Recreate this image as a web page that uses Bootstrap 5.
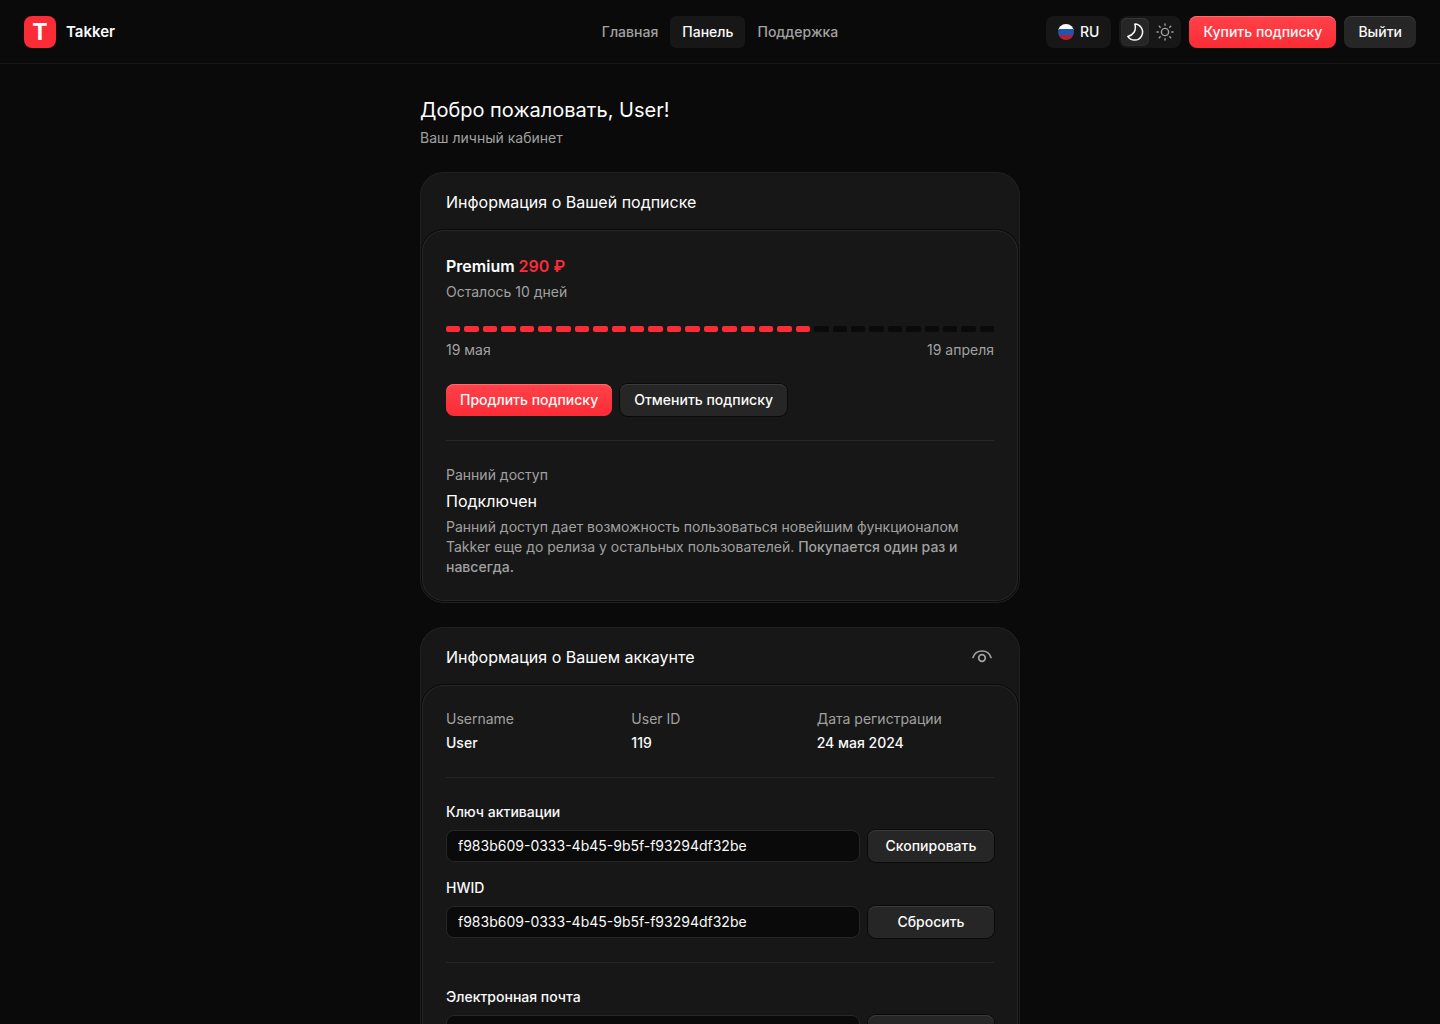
<!DOCTYPE html>
<html lang="ru" data-bs-theme="dark">
<head>
<meta charset="utf-8">
<meta name="viewport" content="width=device-width, initial-scale=1">
<title>Takker</title>
<link href="https://cdn.jsdelivr.net/npm/bootstrap@5.3.0/dist/css/bootstrap.min.css" rel="stylesheet">
<style>
  :root { --bg: #0a0a0a; --surface: #171717; --line: #262626; --muted: #a1a1a1; --text: #fafafa; --accent: #fb2c36; --accent-hi: #ff4249; }
  body { font-family: Inter, "Liberation Sans", sans-serif; font-size: 14px; line-height: 20px; background: var(--bg); color: var(--text); }
  .topbar { height: 64px; border-bottom: 1px solid var(--surface); }
  .topbar-side { flex: 1 1 0; }
  .logo-link { gap: 10px; }
  .logo-tile { width: 32px; height: 32px; border-radius: 8px; background: var(--accent); font-size: 23px; line-height: 32px; font-weight: 700; }
  .brand-name { font-size: 15px; line-height: 24px; }
  .tab-link { height: 32px; padding: 6px 12px; border-radius: 6px; color: var(--muted); }
  .tab-link.active { background: var(--surface); color: var(--text); }
  .lang-btn { height: 32px; padding: 0 12px; gap: 6px; border: 0; border-radius: 8px; background: var(--surface); color: var(--text); }
  .theme-switch { height: 32px; padding: 2px; gap: 2px; border-radius: 8px; background: var(--surface); }
  .theme-btn { width: 28px; height: 28px; padding: 0; border: 0; border-radius: 6px; background: transparent; color: var(--muted); }
  .theme-btn.active { background: var(--line); color: var(--text); box-shadow: inset 0 1px 0 #353535, inset 0 0 0 1px #2b2b2b; }
  .act { height: 32px; padding: 0 14px; border: 0; border-radius: 8px; font-size: 14px; line-height: 20px; font-weight: 500; color: var(--text); }
  .act-accent { background: linear-gradient(var(--accent-hi), var(--accent)); box-shadow: inset 0 1px 0 #ff6a70; }
  .act-accent:hover, .act-plain:hover { color: #fff; filter: brightness(1.1); }
  .act-plain { background: var(--line); box-shadow: inset 0 1px 0 #3a3a3a, 0 0 0 1px var(--bg); }
  .page { max-width: 600px; }
  .page-title { font-size: 20px; line-height: 28px; }
  .muted { color: var(--muted); }
  .panel { padding: 2px; border-radius: 24px; background: var(--surface); box-shadow: inset 0 0 0 1px #202020; }
  .panel-head { height: 56px; padding: 0 24px; }
  .panel-title { font-size: 16px; line-height: 24px; }
  .panel-body { padding: 24px; border-radius: 22px; background: var(--surface); box-shadow: inset 0 0 0 1px var(--line), 0 0 0 1px var(--bg); }
  .price { color: var(--accent); }
  .seg { height: 6px; border-radius: 2px; background: var(--bg); }
  .seg.on { background: var(--accent); }
  .rule { height: 1px; margin: 24px 0; border: 0; background: var(--line); opacity: 1; }
  .field { height: 32px; padding: 4px 11px 6px; border: 1px solid var(--line); border-radius: 8px; background: var(--bg); color: var(--text); font-size: 14px; line-height: 20px; }
  .field:focus { background: var(--bg); border-color: #404040; box-shadow: none; }
  .field-act { width: 126px; }
  .eye-btn { padding: 0; border: 0; background: transparent; color: var(--muted); line-height: 0; }
</style>
</head>
<body>
<header class="topbar d-flex align-items-center px-4">
  <div class="topbar-side d-flex">
    <a href="#" class="logo-link d-flex align-items-center text-decoration-none text-reset">
      <span class="logo-tile text-center text-white">T</span>
      <span class="brand-name fw-semibold">Takker</span>
    </a>
  </div>
  <nav class="d-flex" aria-label="Меню">
    <a href="#" class="tab-link text-decoration-none fw-medium">Главная</a>
    <a href="#" class="tab-link active text-decoration-none fw-medium" aria-current="page">Панель</a>
    <a href="#" class="tab-link text-decoration-none fw-medium">Поддержка</a>
  </nav>
  <div class="topbar-side d-flex justify-content-end gap-2">
    <button type="button" class="lang-btn d-flex align-items-center fw-medium">
      <svg width="16" height="16" viewBox="0 0 16 16" aria-hidden="true"><clipPath id="flag"><circle cx="8" cy="8" r="8"/></clipPath><g clip-path="url(#flag)"><path fill="#fff" d="M0 0h16v6H0z"/><path fill="#1e56b3" d="M0 5h16v6H0z"/><path fill="#b5202c" d="M0 11h16v5H0z"/></g></svg>
      <span>RU</span>
    </button>
    <div class="theme-switch d-flex">
      <button type="button" class="theme-btn active" aria-label="Тёмная тема"><svg width="20" height="20" viewBox="0 0 20 20" fill="none" stroke="currentColor" stroke-width="1.5" stroke-linejoin="round" aria-hidden="true"><path d="M9.8 2.1a8 8 0 1 1-7 12.3C8 13.200 11.900 8.600 9.800 2.100z"/></svg></button>
      <button type="button" class="theme-btn" aria-label="Светлая тема"><svg width="20" height="20" viewBox="0 0 20 20" fill="none" stroke="currentColor" stroke-width="1.400" stroke-linecap="round" aria-hidden="true"><circle cx="10" cy="10" r="3.600"/><path d="M10 2v1.200M10 16.800V18M2 10h1.200M16.800 10H18M4.300 4.300l.9.9M14.800 14.800l.9.9M4.300 15.700l.9-.9M14.800 5.200l.9-.9"/></svg></button>
    </div>
    <button type="button" class="btn act act-accent">Купить подписку</button>
    <button type="button" class="btn act act-plain">Выйти</button>
  </div>
</header>

<main class="page mx-auto py-4 d-flex flex-column gap-4">
  <div class="pt-2">
    <h1 class="page-title fw-normal mb-1">Добро пожаловать, User!</h1>
    <p class="muted mb-0">Ваш личный кабинет</p>
  </div>

  <section class="panel">
    <div class="panel-head d-flex align-items-center">
      <h2 class="panel-title fw-normal mb-0">Информация о Вашей подписке</h2>
    </div>
    <div class="panel-body">
      <h3 class="panel-title fw-semibold mb-1">Premium <span class="price">290 ₽</span></h3>
      <p class="muted mb-4">Осталось 10 дней</p>
      <div class="d-flex gap-1 mb-2" id="days" role="progressbar" aria-label="Срок подписки" aria-valuemin="0" aria-valuemax="30" aria-valuenow="20"></div>
      <div class="d-flex justify-content-between muted mb-4"><span>19 мая</span><span>19 апреля</span></div>
      <div class="d-flex gap-2">
        <button type="button" class="btn act act-accent">Продлить подписку</button>
        <button type="button" class="btn act act-plain">Отменить подписку</button>
      </div>
      <hr class="rule">
      <p class="muted mb-1">Ранний доступ</p>
      <h3 class="panel-title fw-normal mb-1">Подключен</h3>
      <p class="muted mb-0">Ранний доступ дает возможность пользоваться новейшим функционалом Takker еще до релиза у остальных пользователей. <span class="fw-medium">Покупается один раз и навсегда.</span></p>
    </div>
  </section>

  <section class="panel">
    <div class="panel-head d-flex align-items-center justify-content-between">
      <h2 class="panel-title fw-normal mb-0">Информация о Вашем аккаунте</h2>
      <button type="button" class="eye-btn" aria-label="Показать данные"><svg width="24" height="24" viewBox="0 0 24 24" fill="none" stroke="currentColor" stroke-width="1.700" stroke-linecap="round" aria-hidden="true"><path d="M3 12.500c1.300-4 4.800-6.500 9-6.500s7.700 2.500 9 6.500"/><circle cx="12" cy="13" r="3.300"/></svg></button>
    </div>
    <div class="panel-body">
      <dl class="row row-cols-3 gx-2 mb-0">
        <div class="col"><dt class="muted fw-normal mb-1">Username</dt><dd class="fw-medium mb-0">User</dd></div>
        <div class="col"><dt class="muted fw-normal mb-1">User ID</dt><dd class="fw-medium mb-0">119</dd></div>
        <div class="col"><dt class="muted fw-normal mb-1">Дата регистрации</dt><dd class="fw-medium mb-0">24 мая 2024</dd></div>
      </dl>
      <hr class="rule">
      <label class="d-block fw-medium mb-2" for="key">Ключ активации</label>
      <div class="d-flex gap-2 mb-3">
        <input class="form-control field" id="key" type="text" value="f983b609-0333-4b45-9b5f-f93294df32be" readonly>
        <button type="button" class="btn act act-plain field-act flex-shrink-0">Скопировать</button>
      </div>
      <label class="d-block fw-medium mb-2" for="hwid">HWID</label>
      <div class="d-flex gap-2">
        <input class="form-control field" id="hwid" type="text" value="f983b609-0333-4b45-9b5f-f93294df32be" readonly>
        <button type="button" class="btn act act-plain field-act flex-shrink-0">Сбросить</button>
      </div>
      <hr class="rule">
      <label class="d-block fw-medium mb-2" for="mail">Электронная почта</label>
      <div class="d-flex gap-2">
        <input class="form-control field" id="mail" type="email">
        <button type="button" class="btn act act-plain field-act flex-shrink-0" aria-label="Изменить почту"></button>
      </div>
    </div>
  </section>
</main>
<script src="https://cdn.jsdelivr.net/npm/bootstrap@5.3.0/dist/js/bootstrap.bundle.min.js"></script>
<script>
  const days = document.getElementById('days');
  for (let day = 0; day < 30; day++) {
    const seg = document.createElement('span');
    seg.className = 'seg flex-fill' + (day < 20 ? ' on' : '');
    days.append(seg);
  }
</script>
</body>
</html>
